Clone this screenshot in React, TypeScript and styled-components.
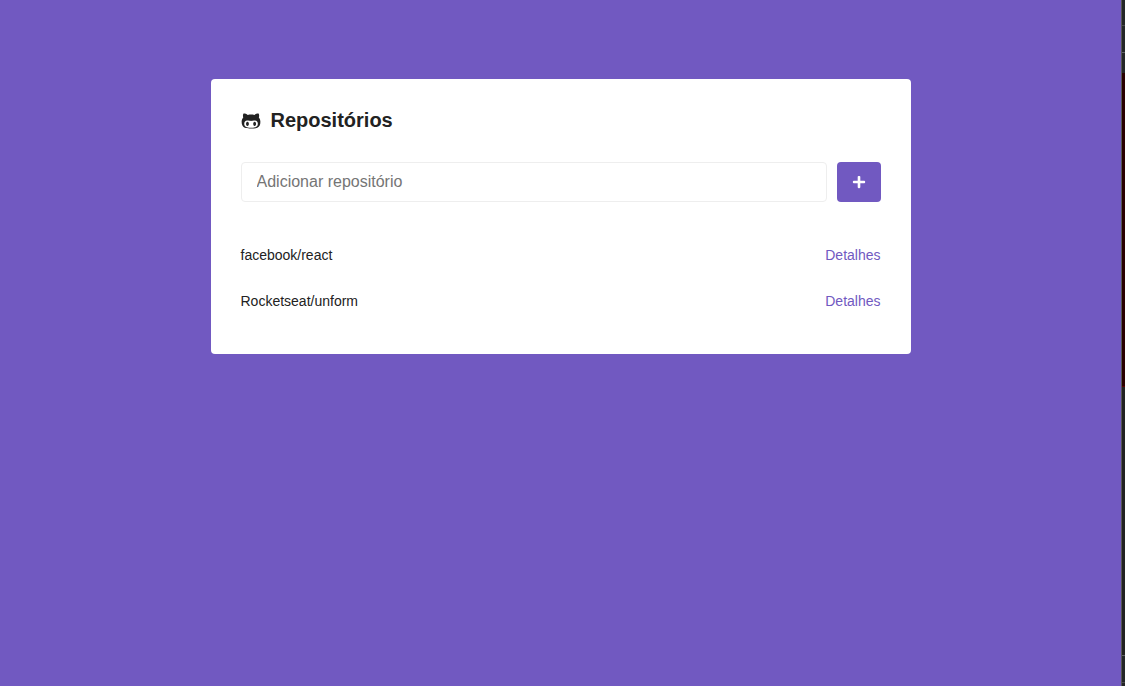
import React, { useState } from 'react';
import styled, { createGlobalStyle } from 'styled-components';
import { FaGithubAlt, FaPlus } from 'react-icons/fa';

const GlobalStyle = createGlobalStyle`
  * {
    margin: 0;
    padding: 0;
    box-sizing: border-box;
  }
  body {
    background: #7159c1;
    -webkit-font-smoothing: antialiased;
  }
  body, input, button {
    font: 14px "Liberation Sans", Arial, Helvetica, sans-serif;
    color: #222;
  }
`;

const Page = styled.div`
  display: grid;
  grid-template-columns: 1fr 4px;
  min-height: 100vh;
`;

const Main = styled.main`
  padding-top: 79px;
`;

const Container = styled.section`
  max-width: 700px;
  margin: 0 auto;
  padding: 30px;
  background: #fff;
  border-radius: 4px;
`;

const Title = styled.h1`
  display: flex;
  align-items: center;
  gap: 10px;
  font-size: 20px;
  line-height: 23px;
`;

const Form = styled.form`
  display: flex;
  gap: 10px;
  margin-top: 30px;
`;

const RepoInput = styled.input`
  flex: 1;
  min-width: 0;
  height: 40px;
  padding: 10px 15px;
  border: 1px solid #eee;
  border-radius: 4px;
  font-size: 16px;

  &::placeholder {
    color: #757575;
  }
`;

const SubmitButton = styled.button`
  display: flex;
  align-items: center;
  justify-content: center;
  padding: 0 15px;
  border: 0;
  border-radius: 4px;
  background: #7159c1;
  color: #fff;
  cursor: pointer;
`;

const List = styled.ul`
  list-style: none;
  margin-top: 30px;
`;

const Item = styled.li`
  display: flex;
  align-items: center;
  justify-content: space-between;
  padding: 15px 0;
  line-height: 16px;
`;

const DetailsLink = styled.a`
  color: #7159c1;
  text-decoration: none;
`;

const SidePanel = styled.aside`
  display: flex;
  flex-direction: column;
  border-left: 1px solid #555;
  background: #222;
`;

const PanelRow = styled.div<{ $height?: number; $color: string; $line: string }>`
  flex: ${({ $height }) => ($height ? `0 0 ${$height}px` : '1')};
  background: ${({ $color }) => $color};
  border-bottom: 1px solid ${({ $line }) => $line};
`;

const panelRows = [
  { height: 26, color: '#242628', line: '#484a4d' },
  { height: 27, color: '#242628', line: '#606367' },
  { height: 20, color: '#242628', line: '#242628' },
  { height: 314, color: '#290000', line: '#5c0000' },
  { color: '#222', line: '#606367' },
  { height: 27, color: '#242628', line: '#484a4d' },
  { height: 3, color: '#242628', line: '#242628' },
];

const repositories = ['facebook/react', 'Rocketseat/unform'];

export default function App() {
  const [newRepo, setNewRepo] = useState('');

  return (
    <>
      <GlobalStyle />
      <Page>
        <Main>
          <Container>
            <Title>
              <FaGithubAlt size={20} />
              Repositórios
            </Title>
            <Form onSubmit={(event) => event.preventDefault()}>
              <RepoInput
                type="text"
                aria-label="Adicionar repositório"
                placeholder="Adicionar repositório"
                value={newRepo}
                onChange={(event) => setNewRepo(event.target.value)}
              />
              <SubmitButton type="submit" aria-label="Adicionar">
                <FaPlus size={14} />
              </SubmitButton>
            </Form>
            <List>
              {repositories.map((name) => (
                <Item key={name}>
                  <span>{name}</span>
                  <DetailsLink href={`#/repository/${encodeURIComponent(name)}`}>Detalhes</DetailsLink>
                </Item>
              ))}
            </List>
          </Container>
        </Main>
        <SidePanel aria-hidden="true">
          {panelRows.map((row, index) => (
            <PanelRow key={index} $height={row.height} $color={row.color} $line={row.line} />
          ))}
        </SidePanel>
      </Page>
    </>
  );
}
